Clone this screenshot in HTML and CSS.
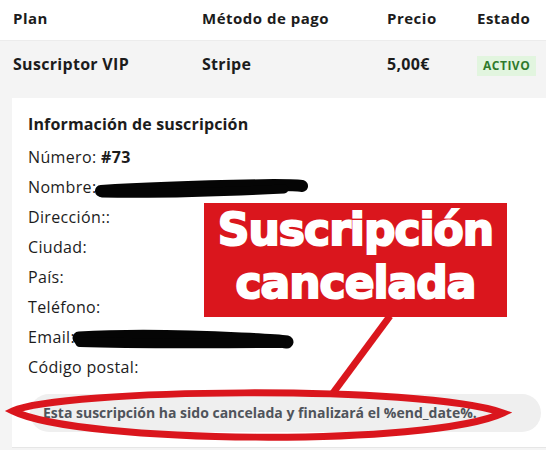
FILE: index.html
```html
<!DOCTYPE html>
<html lang="es">
<head>
<meta charset="utf-8">
<title>Suscripción</title>
<link rel="stylesheet" href="styles.css">
</head>
<body>
<div class="page">
  <div class="table">
    <div class="thead">
      <div>Plan</div>
      <div>Método de pago</div>
      <div>Precio</div>
      <div>Estado</div>
    </div>
    <div class="trow">
      <div>Suscriptor VIP</div>
      <div>Stripe</div>
      <div>5,00€</div>
      <div><span class="badge">ACTIVO</span></div>
    </div>
    <div class="detail">
      <div class="card">
        <h3 class="card-title">Información de suscripción</h3>
        <ul class="info">
          <li>Número: <strong>#73</strong></li>
          <li>Nombre:<svg class="scribble scribble-name" viewBox="0 0 220 22" width="220" height="22"><g class="ink"><path d="M7,13 C50,10 120,8 180,7 C195,7 205,7 208,8" stroke-width="12"/><path d="M8,15 C60,16 130,14 190,11" stroke-width="9"/></g></svg></li>
          <li>Dirección::</li>
          <li>Ciudad:</li>
          <li>País:</li>
          <li>Teléfono:</li>
          <li>Email:<svg class="scribble scribble-mail" viewBox="0 0 226 24" width="226" height="24"><g class="ink"><path d="M8,11 C60,8 130,10 170,12 C195,13 210,14 216,15" stroke-width="13"/><path d="M9,15 C70,17 140,16 210,16" stroke-width="10"/></g></svg></li>
          <li>Código postal:</li>
        </ul>
        <div class="notice">Esta suscripción ha sido cancelada y finalizará el %end_date%.</div>
      </div>
    </div>
  </div>

  <div class="callout">Suscripción<br>cancelada</div>

  <svg class="annot" viewBox="0 0 546 450" width="546" height="450">
    <path class="pointer" d="M390,316 L333,393"/>
    <path class="ring" d="M13,411 C60,389 420,384 503,413 C430,447 80,444 13,411 Z"/>
  </svg>
</div>
</body>
</html>
```

FILE: styles.css
```css
* { box-sizing: border-box; }

html, body {
  margin: 0;
  padding: 0;
  background: #ffffff;
}

body {
  width: 546px;
  height: 450px;
  overflow: hidden;
  font-family: "Open Sans", Roboto, "Liberation Sans", sans-serif;
  color: #1c1c1c;
}

.page {
  position: relative;
  width: 546px;
  height: 450px;
}

.thead,
.trow {
  display: grid;
  grid-template-columns: 189px 185px 90px 1fr;
  padding-left: 13px;
  font-weight: 700;
}

.thead {
  background: #ffffff;
  font-size: 15px;
  letter-spacing: 0.5px;
  line-height: 20px;
  padding-top: 8px;
  padding-bottom: 12px;
  border-bottom: 1px solid #ececec;
}

.trow {
  background: #f4f4f4;
  font-size: 16px;
  letter-spacing: 0.3px;
  line-height: 20px;
  height: 57px;
  padding-top: 13px;
  align-items: start;
}

.badge {
  display: inline-block;
  height: 20px;
  line-height: 20px;
  padding: 0 6px;
  margin-top: 1px;
  background: #e2f5df;
  color: #2f7a2c;
  font-size: 12px;
  letter-spacing: 0.5px;
  font-weight: 700;
}

.detail {
  background: #f4f4f4;
  padding-left: 12px;
  padding-bottom: 2px;
}

.card {
  background: #ffffff;
  width: 545px;
  padding: 16px 16px 15px 16px;
  border-bottom: 1px solid #e6e6e6;
}

.card-title {
  margin: 0;
  font-size: 16px;
  letter-spacing: 0.15px;
  line-height: 20px;
  font-weight: 700;
}

.info {
  list-style: none;
  margin: 8px 0 0 0;
  padding: 0;
  font-size: 16px;
  letter-spacing: 0.35px;
  line-height: 30px;
}

.info li {
  height: 30px;
  white-space: nowrap;
}

.info strong {
  font-weight: 700;
}

.scribble {
  vertical-align: middle;
  overflow: visible;
}

.scribble-name { margin-left: -2px; }
.scribble-mail { margin-left: -4px; }

.ink path {
  fill: none;
  stroke: #050505;
  stroke-linecap: round;
  filter: blur(0.6px);
}

.notice {
  margin: 12px 0 0 2px;
  height: 38px;
  line-height: 38px;
  padding: 0 13px;
  border-radius: 19px;
  background: #efefef;
  color: #4f545b;
  font-size: 14px;
  font-weight: 700;
  white-space: nowrap;
}

.callout {
  position: absolute;
  left: 204px;
  top: 203px;
  width: 303px;
  height: 114px;
  background: #da161d;
  color: #ffffff;
  font-family: "DejaVu Sans", sans-serif;
  font-weight: 700;
  font-size: 44px;
  line-height: 53px;
  text-align: center;
  -webkit-text-stroke: 2px #ffffff;
  letter-spacing: -1px;
}

.annot {
  position: absolute;
  left: 0;
  top: 0;
  pointer-events: none;
}

.pointer {
  fill: none;
  stroke: #da161d;
  stroke-width: 7;
}

.ring {
  fill: none;
  stroke: #da161d;
  stroke-width: 7;
  stroke-linejoin: miter;
  stroke-miterlimit: 20;
}
```
